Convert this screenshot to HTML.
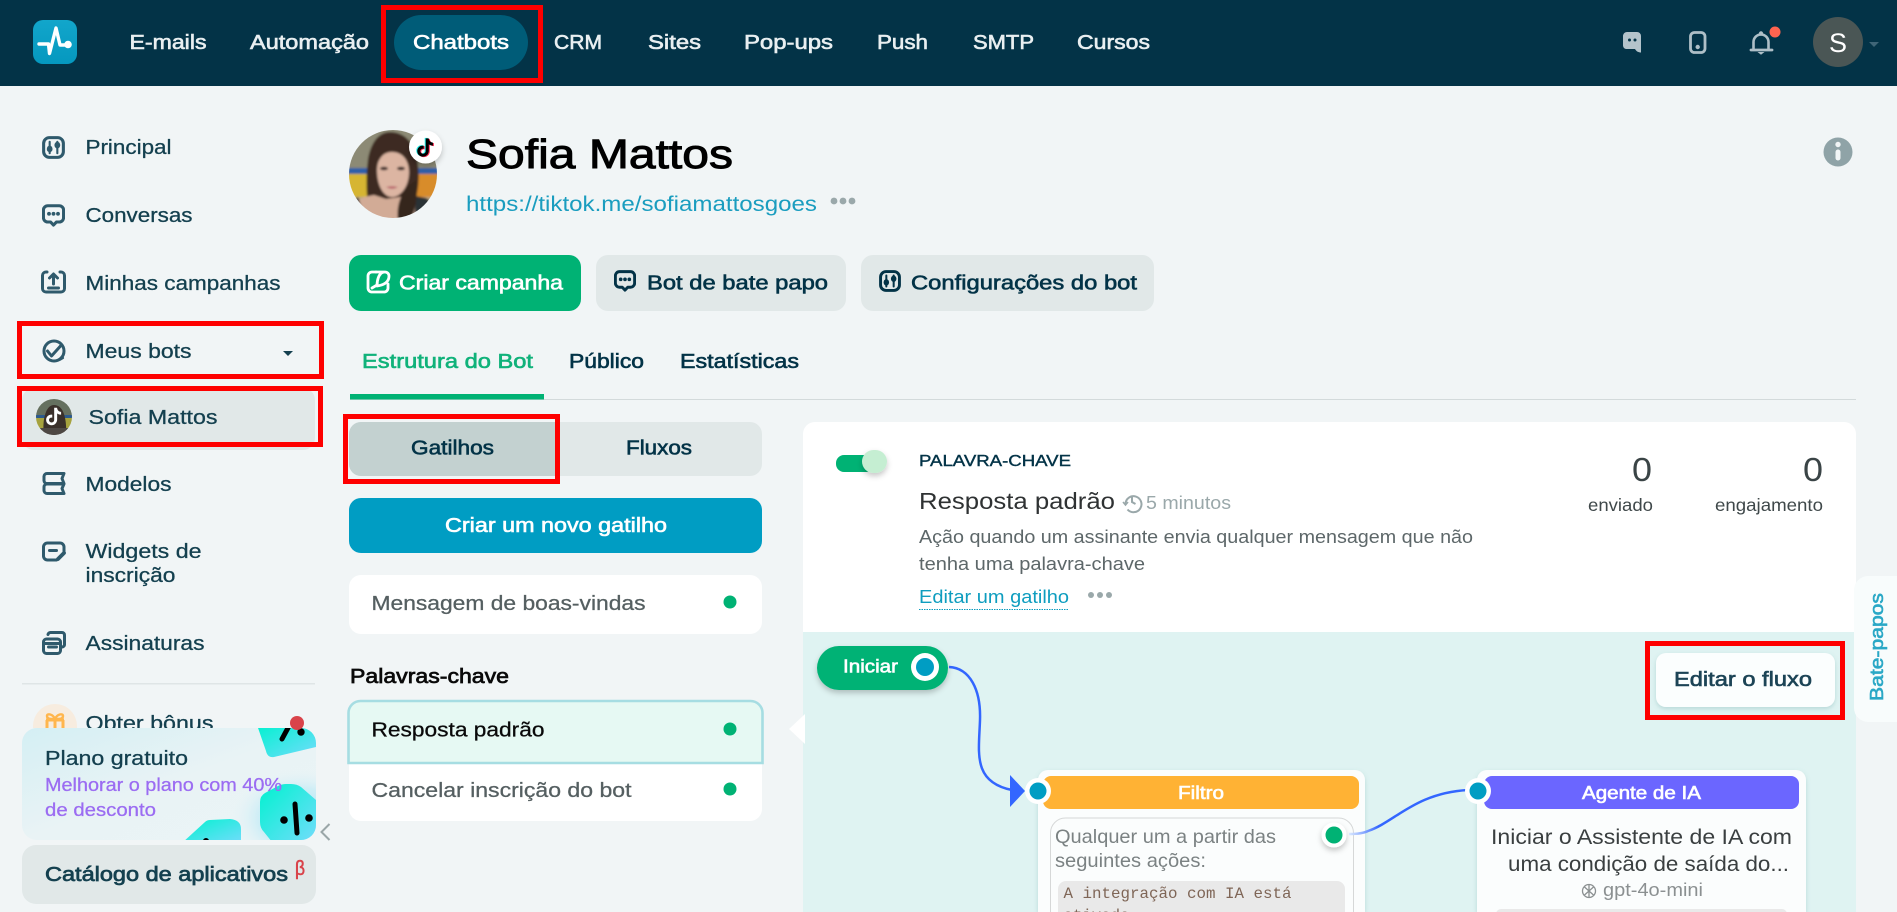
<!DOCTYPE html>
<html lang="pt-BR">
<head>
<meta charset="utf-8">
<title>Sofia Mattos - Chatbots</title>
<style>
html,body{margin:0;padding:0;background:#f1f5f6;overflow:hidden;width:1897px;height:912px}
svg{display:block}
text{font-family:"Liberation Sans",sans-serif;fill:currentColor}
.s{stroke:currentColor;stroke-width:.6px}
.m{stroke:currentColor;stroke-width:.28px}
.ic{fill:none;stroke:#2f5a6c;stroke-width:3;stroke-linecap:round;stroke-linejoin:round}
</style>
</head>
<body>
<svg xmlns="http://www.w3.org/2000/svg" width="1897" height="912" viewBox="0 0 1897 912">
<defs>
  <clipPath id="av"><circle cx="393" cy="174" r="44"/></clipPath>
  <clipPath id="av2"><circle cx="54" cy="417" r="18"/></clipPath>
  <clipPath id="card"><rect x="22" y="728" width="294" height="112" rx="15"/></clipPath>
  <clipPath id="obter"><rect x="0" y="690" width="340" height="38"/></clipPath>
  <clipPath id="grayb"><rect x="1050" y="817" width="304" height="95"/></clipPath>
  <linearGradient id="cg" x1="0" y1="0" x2="1" y2="1"><stop offset="0" stop-color="#d4eff4"/><stop offset=".5" stop-color="#e9f3f5"/><stop offset="1" stop-color="#eaf4f6"/></linearGradient>
  <radialGradient id="glow" cx=".5" cy=".5" r=".5"><stop offset="0" stop-color="#9fe6f7"/><stop offset=".6" stop-color="#bdeaf5" stop-opacity=".6"/><stop offset="1" stop-color="#eaf4f6" stop-opacity="0"/></radialGradient>
  <linearGradient id="bl" x1="0" y1="0" x2="1" y2="1"><stop offset="0" stop-color="#00f2cf"/><stop offset="1" stop-color="#72dcfb"/></linearGradient>
  <linearGradient id="rg" x1="0" x2="1"><stop offset="0" stop-color="#dbe9ff"/><stop offset=".25" stop-color="#3366ff"/></linearGradient>
  <linearGradient id="lg" x1="0" y1="0" x2="0" y2="1"><stop offset="0" stop-color="#12a6cb"/><stop offset="1" stop-color="#0598bf"/></linearGradient>
  <filter id="sh" x="-40%" y="-40%" width="180%" height="200%"><feDropShadow dx="0" dy="3" stdDeviation="3" flood-color="#000" flood-opacity=".22"/></filter>
  <filter id="sh2" x="-20%" y="-20%" width="140%" height="150%"><feDropShadow dx="0" dy="2" stdDeviation="2.5" flood-color="#5a9a9a" flood-opacity=".3"/></filter>
  <filter id="soft" x="-10%" y="-10%" width="120%" height="120%"><feGaussianBlur stdDeviation="1"/></filter>
  <symbol id="tt" viewBox="0 0 24 24"><path d="M15.5 2c.3 2.7 1.900 4.400 4.600 4.700v3.200c-1.700 0-3.200-.5-4.500-1.500v7c0 3.800-2.900 6.600-6.400 6.600-3.500 0-6.200-2.700-6.200-6.100 0-3.700 3.200-6.500 7-5.900v3.400c-2-.4-3.700.8-3.700 2.600 0 1.500 1.300 2.800 2.900 2.800 1.800 0 3-1.200 3-3.100V2z"/></symbol>
  <symbol id="sl" viewBox="0 0 24 24"><rect x="1.700" y="1.700" width="20.600" height="20.600" rx="6" fill="none" stroke="currentColor" stroke-width="3.200"/><path d="M8 6v12M16 6v12" stroke="currentColor" stroke-width="2.200" stroke-linecap="round"/><ellipse cx="8" cy="13.500" rx="3" ry="3.500" fill="currentColor"/><ellipse cx="16" cy="9.500" rx="3" ry="3.500" fill="currentColor"/></symbol>
  <symbol id="ch" viewBox="0 0 24 24"><path d="M6 1.800h12a4.500 4.500 0 0 1 4.500 4.500v8a4.500 4.500 0 0 1-4.500 4.500h-3l-3 3.200-3-3.200H6a4.500 4.500 0 0 1-4.500-4.500v-8A4.500 4.500 0 0 1 6 1.800z" fill="none" stroke="currentColor" stroke-width="3.200" stroke-linejoin="round"/><circle cx="7.300" cy="10.200" r="2" fill="currentColor"/><circle cx="12" cy="10.200" r="2" fill="currentColor"/><circle cx="16.700" cy="10.200" r="2" fill="currentColor"/></symbol>
</defs>

<!-- Top navigation -->
<rect width="1897" height="86" fill="#033347"/>
<rect x="33" y="20" width="44" height="44" rx="10" fill="url(#lg)"/>
<path d="M39 44H48.500L49.500 53.500L56 28L60 45H68" fill="none" stroke="#fff" stroke-width="3.400" stroke-linejoin="round" stroke-linecap="round"/>
<circle cx="68" cy="44.500" r="3.800" fill="#fff"/>
<rect x="394" y="15" width="134" height="55" rx="27.500" fill="#005c78"/>
<g color="#e9eff1" font-size="20" class="s">
  <text x="129.500" y="49" textLength="77" lengthAdjust="spacingAndGlyphs">E-mails</text>
  <text x="250" y="49" textLength="119" lengthAdjust="spacingAndGlyphs">Automação</text>
  <text x="413" y="49" textLength="96" lengthAdjust="spacingAndGlyphs" style="color:#fff">Chatbots</text>
  <text x="554" y="49" textLength="48" lengthAdjust="spacingAndGlyphs">CRM</text>
  <text x="648" y="49" textLength="53" lengthAdjust="spacingAndGlyphs">Sites</text>
  <text x="744" y="49" textLength="89" lengthAdjust="spacingAndGlyphs">Pop-ups</text>
  <text x="877" y="49" textLength="51" lengthAdjust="spacingAndGlyphs">Push</text>
  <text x="973" y="49" textLength="61" lengthAdjust="spacingAndGlyphs">SMTP</text>
  <text x="1077" y="49" textLength="73" lengthAdjust="spacingAndGlyphs">Cursos</text>
</g>
<rect x="383.500" y="7.500" width="157" height="73" fill="none" stroke="#fe0000" stroke-width="5"/>

<!-- Top right icons -->
<path d="M1627 32h10a4 4 0 0 1 4 4v16.500c-2.500 0-4.500-1-6-3.500h-9a3.500 3.500 0 0 1-3-3.500v-10a4 4 0 0 1 4-3.500z" fill="#b3c3cb"/>
<circle cx="1629.500" cy="40" r="1.500" fill="#033347"/><circle cx="1635" cy="40" r="1.500" fill="#033347"/>
<rect x="1690.500" y="32.500" width="14.500" height="20" rx="4" fill="none" stroke="#aebfc7" stroke-width="2.800"/>
<circle cx="1697.700" cy="47" r="2.200" fill="#aebfc7"/>
<path d="M1753.500 49v-7a7.500 7.500 0 0 1 15 0v7" fill="none" stroke="#aebfc7" stroke-width="2.600"/>
<path d="M1751 50h21" stroke="#aebfc7" stroke-width="2.800" stroke-linecap="round"/>
<circle cx="1761" cy="33.500" r="2.200" fill="#aebfc7"/><path d="M1757.500 52h7l-3.500 2.800z" fill="#aebfc7"/>
<circle cx="1775" cy="32" r="5.500" fill="#ff6450"/>
<circle cx="1838" cy="42" r="25" fill="#4a5655"/>
<text x="1829" y="52" font-size="27" color="#fff" textLength="18" lengthAdjust="spacingAndGlyphs">S</text>
<path d="M1869 42h10l-5 5z" fill="#3f6577"/>

<!-- Sidebar -->
<rect x="22" y="388" width="293" height="62" rx="12" fill="#e1e8e8"/>
<use href="#sl" x="42" y="136" width="23" height="23" color="#2f5a6c"/>
<use href="#ch" x="42" y="204" width="23" height="23" color="#2f5a6c"/>
<g class="ic">
  <path d="M47 272h-1a3.500 3.500 0 0 0-3.500 3.500v13a3.500 3.500 0 0 0 3.500 3.500h15a3.500 3.500 0 0 0 3.500-3.500v-13a3.500 3.500 0 0 0-3.500-3.500h-1"/>
  <path d="M53.500 284v-9M49.500 278l4-4 4 4M48.500 288h10"/>
  <circle cx="54" cy="351" r="10"/><path d="M47.500 351l4 5 9-10"/>
  <path d="M46 357c5 5 11 5 17 1" stroke-width="2.200"/>
  <path d="M47 473.500h17l-2 5 2 5H47a3 3 0 0 1-3-2.800v-4.400a3 3 0 0 1 3-2.800zM47 484h17l-2 4.500 2 5H47a3 3 0 0 1-3-3v-3.500a3 3 0 0 1 3-3z"/>
  <path d="M64 552v-5a4 4 0 0 0-4-4H47.500a4 4 0 0 0-4 4v9a4 4 0 0 0 4 4h9M49.500 550.500h7"/>
  <path d="M58 559l6-6" stroke-width="3.800"/>
  <rect x="43.500" y="639" width="17" height="14.500" rx="3"/><path d="M48 634.500a2.500 2.500 0 0 1 2.500-2h11.500a2.500 2.500 0 0 1 2.500 2.500v9.500a2.500 2.500 0 0 1-2 2.500M48.500 647h8M44 643.500h16"/>
</g>
<g clip-path="url(#av2)">
  <rect x="36" y="399" width="36" height="18" fill="#65705f"/>
  <rect x="36" y="415" width="36" height="3" fill="#2c5a8c"/>
  <rect x="36" y="418" width="36" height="12" fill="#a6a23e"/>
  <path d="M44 436c-2-14 1-31 10-31s13 12 12 31z" fill="#3a302a"/>
  <rect x="36" y="428" width="36" height="8" fill="#4d4743"/>
</g>
<use href="#tt" x="43.500" y="406" width="21" height="21" fill="#fff"/>
<g color="#14404f" font-size="20" class="m">
  <text x="85.500" y="154" textLength="86" lengthAdjust="spacingAndGlyphs">Principal</text>
  <text x="85.500" y="222" textLength="107" lengthAdjust="spacingAndGlyphs">Conversas</text>
  <text x="85.500" y="290" textLength="195" lengthAdjust="spacingAndGlyphs">Minhas campanhas</text>
  <text x="85.500" y="358" textLength="106" lengthAdjust="spacingAndGlyphs">Meus bots</text>
  <text x="88.500" y="424" textLength="129" lengthAdjust="spacingAndGlyphs">Sofia Mattos</text>
  <text x="85.500" y="491" textLength="86" lengthAdjust="spacingAndGlyphs">Modelos</text>
  <text x="85.500" y="558" textLength="116" lengthAdjust="spacingAndGlyphs">Widgets de</text>
  <text x="85.500" y="582" textLength="90" lengthAdjust="spacingAndGlyphs">inscrição</text>
  <text x="85.500" y="650" textLength="119" lengthAdjust="spacingAndGlyphs">Assinaturas</text>
  <g clip-path="url(#obter)"><text x="85.500" y="730" textLength="128" lengthAdjust="spacingAndGlyphs">Obter bônus</text></g>
</g>
<path d="M283 351h10l-5 5z" fill="#14404f"/>
<rect x="22" y="683" width="293" height="1.500" fill="#dfe5e6"/>
<g clip-path="url(#obter)">
  <circle cx="55" cy="726" r="22" fill="#f7ecdf"/>
  <g fill="none" stroke="#ffb64d" stroke-width="3"><path d="M47 720v12M63 720v12M55 720v12M46 720h18"/><path d="M55 719c-2-5-8-6-8-3s3 3 8 3c5 0 8 0 8-3s-6-2-8 3z" stroke-width="2.400"/></g>
</g>
<!-- Plan card -->
<rect x="22" y="728" width="294" height="112" rx="15" fill="url(#cg)"/>
<g clip-path="url(#card)">
  <ellipse cx="300" cy="818" rx="70" ry="50" fill="url(#glow)"/>
  <path d="M257 725l9 26q1.500 7 8 6l42-10v-23z" fill="url(#bl)"/>
  <path d="M289 726l-7 13" stroke="#000" stroke-width="5" stroke-linecap="round"/>
  <circle cx="301" cy="732" r="3.700"/>
  <path d="M260 802q0-6 5-9l13-7q4-2 8-2h5q6 0 10 3l15 13v42h-44l-8-10q-4-4-4-10z" fill="url(#bl)"/>
  <path d="M295 804l2 29" stroke="#000" stroke-width="5" stroke-linecap="round"/>
  <circle cx="284" cy="820" r="3.800"/><circle cx="309" cy="818" r="3.800"/>
  <path d="M182 843l23-21q2-2 5-2l20-1q11 1 11 10v14z" fill="url(#bl)"/>
  <circle cx="206" cy="841" r="3"/>
</g>
<circle cx="297" cy="723" r="7" fill="#d9434a"/>
<text x="45" y="765" font-size="20" color="#14404f" class="m" textLength="143" lengthAdjust="spacingAndGlyphs">Plano gratuito</text>
<g color="#9b6cf2" font-size="18.500" class="m">
  <text x="45" y="791" textLength="237" lengthAdjust="spacingAndGlyphs">Melhorar o plano com 40%</text>
  <text x="45" y="816" textLength="111" lengthAdjust="spacingAndGlyphs">de desconto</text>
</g>
<path d="M329.500 824l-8 8 8 8" fill="none" stroke="#9aa6a8" stroke-width="2"/>
<rect x="22" y="845" width="294" height="59" rx="14" fill="#e1e8e8"/>
<text x="45" y="881" font-size="20" color="#14404f" style="stroke-width:.7px" class="s" textLength="243" lengthAdjust="spacingAndGlyphs">Catálogo de aplicativos</text>
<text x="295" y="875" font-size="20" color="#d9434a" class="s" font-family="DejaVu Sans" textLength="10" lengthAdjust="spacingAndGlyphs">β</text>
<rect x="19.500" y="323.500" width="302" height="53" fill="none" stroke="#fe0000" stroke-width="5"/>
<rect x="19.500" y="388.500" width="301" height="56" fill="none" stroke="#fe0000" stroke-width="5"/>

<!-- Profile header -->
<g clip-path="url(#av)">
  <g filter="url(#soft)">
    <rect x="345" y="126" width="96" height="44" fill="#8c8a74"/>
    <rect x="345" y="168" width="96" height="6" fill="#2f5fa8"/>
    <rect x="345" y="174" width="48" height="30" fill="#d6b530"/>
    <rect x="393" y="174" width="48" height="30" fill="#d88c2a"/>
    <rect x="345" y="197" width="96" height="25" fill="#b9a582"/>
    <path d="M368 205c-2-15-2-30 0-46 3-17 11-27 22-27 14 0 24 10 27 27 3 15 2 30-3 46l-8 14h-30z" fill="#3e2c20"/>
    <path d="M352 222l0-18 12-7 10-2 12 4 14-2 10-2 6 3 12 6v18z" fill="#d2ab96"/>
    <path d="M346 206l12-9 4 12-2 14h-14zM416 196l10 2 12 8v16h-24z" fill="#2c3034"/>
    <path d="M398 222c-2-14 2-26 8-34l10-8c2 14 0 30-6 42z" fill="#35261c"/>
    <path d="M377 170c0-11 6-18 15-18 11 0 17 9 17 20 0 14-8 25-17 25-9 0-15-12-15-27z" fill="#dcb5a2"/>
    <path d="M376 168c2-8 7-14 11-17-5 1-12 6-13 16zM410 170c-1-9-6-16-13-19 8 1 15 8 15 18z" fill="#3e2c20"/>
    <ellipse cx="384" cy="168.500" rx="4" ry="1.800" fill="#3a2a25"/><ellipse cx="401" cy="168.500" rx="4" ry="1.800" fill="#3a2a25"/>
    <path d="M386 187q6 3.500 12 0q-6-1.500-12 0z" fill="#b8626a"/>
  </g>
</g>
<circle cx="425.500" cy="147" r="16.500" fill="#fff" filter="url(#sh)"/>
<use href="#tt" x="413.500" y="136" width="22" height="22" fill="#25f4ee"/>
<use href="#tt" x="415.500" y="137" width="22" height="22" fill="#fe2c55"/>
<use href="#tt" x="414.500" y="136.500" width="22" height="22" fill="#000"/>
<text x="466" y="168" font-size="41" color="#000" style="stroke-width:.95px" class="s" textLength="267" lengthAdjust="spacingAndGlyphs">Sofia Mattos</text>
<text x="466" y="211" font-size="21" color="#1a9dbf" textLength="351" lengthAdjust="spacingAndGlyphs">https://tiktok.me/sofiamattosgoes</text>
<g fill="#9aa8aa"><circle cx="834" cy="201" r="3.400"/><circle cx="843" cy="201" r="3.400"/><circle cx="852" cy="201" r="3.400"/></g>
<circle cx="1838" cy="152" r="14.500" fill="#8fa3a7"/>
<circle cx="1838" cy="144.500" r="2.700" fill="#f1f5f6"/><rect x="1835.500" y="149.500" width="5" height="11" rx="2.500" fill="#f1f5f6"/>

<!-- Action buttons -->
<rect x="349" y="255" width="232" height="56" rx="12" fill="#00b274"/>
<g fill="none" stroke="#fff" stroke-width="2.800" stroke-linejoin="round" stroke-linecap="round">
  <path d="M376 272h-4a4 4 0 0 0-4 4v12a4 4 0 0 0 4 4h12a4 4 0 0 0 4-4v-4"/>
  <path d="M376 272h9a4 4 0 0 1 4 4c0 6-5 9-12 10 0-4 1-14 8-14M372 288l5-3"/>
</g>
<text x="399" y="289.500" font-size="20" color="#fff" class="s" textLength="164" lengthAdjust="spacingAndGlyphs">Criar campanha</text>
<rect x="596" y="255" width="250" height="56" rx="12" fill="#e1e8e8"/>
<use href="#ch" x="614" y="270" width="22" height="22" color="#033347"/>
<text x="647" y="289.500" font-size="20" color="#033347" class="s" textLength="181" lengthAdjust="spacingAndGlyphs">Bot de bate papo</text>
<rect x="861" y="255" width="293" height="56" rx="12" fill="#e1e8e8"/>
<use href="#sl" x="879" y="270" width="22" height="22" color="#033347"/>
<text x="911" y="289.500" font-size="20" color="#033347" class="s" textLength="226" lengthAdjust="spacingAndGlyphs">Configurações do bot</text>

<!-- Tabs -->
<rect x="350" y="399" width="1506" height="1" fill="#d3dadb"/>
<rect x="350" y="394" width="194" height="5.500" fill="#00b274"/>
<g font-size="20" class="s">
  <text x="362" y="368" color="#10b27a" textLength="171" lengthAdjust="spacingAndGlyphs">Estrutura do Bot</text>
  <text x="569" y="368" color="#033347" textLength="75" lengthAdjust="spacingAndGlyphs">Público</text>
  <text x="680" y="368" color="#033347" textLength="119" lengthAdjust="spacingAndGlyphs">Estatísticas</text>
</g>

<!-- Left column -->
<rect x="349" y="422" width="413" height="54" rx="12" fill="#e1e8e8"/>
<path d="M361 422h194v54H361a12 12 0 0 1-12-12v-30a12 12 0 0 1 12-12z" fill="#c3d1d0"/>
<g font-size="20" color="#033347" class="s">
  <text x="411" y="454.500" textLength="83" lengthAdjust="spacingAndGlyphs">Gatilhos</text>
  <text x="626" y="454.500" textLength="66" lengthAdjust="spacingAndGlyphs">Fluxos</text>
</g>
<rect x="345.500" y="416.500" width="212" height="65" fill="none" stroke="#fe0000" stroke-width="5"/>
<rect x="349" y="498" width="413" height="55" rx="12" fill="#009dc3"/>
<text x="445" y="532" font-size="20" color="#fff" class="s" textLength="222" lengthAdjust="spacingAndGlyphs">Criar um novo gatilho</text>
<rect x="349" y="575" width="413" height="59" rx="12" fill="#fff"/>
<text x="371.500" y="610" font-size="20" color="#555f61" class="m" textLength="274" lengthAdjust="spacingAndGlyphs">Mensagem de boas-vindas</text>
<circle cx="730" cy="602" r="6.500" fill="#00b274"/>
<text x="350" y="683" font-size="20" color="#0a0a0a" style="stroke-width:.7px" class="s" textLength="159" lengthAdjust="spacingAndGlyphs">Palavras-chave</text>
<path d="M349 750h413v59a12 12 0 0 1-12 12H361a12 12 0 0 1-12-12z" fill="#fff"/>
<path d="M348.500 763v-50a12 12 0 0 1 12-12h390a12 12 0 0 1 12 12v50z" fill="#e6f9f3" stroke="#a6dde2" stroke-width="2.600"/>
<text x="371.500" y="736.500" font-size="20" color="#0a0a0a" class="m" textLength="173" lengthAdjust="spacingAndGlyphs">Resposta padrão</text>
<circle cx="730" cy="729" r="6.500" fill="#00b274"/>
<text x="371.500" y="797" font-size="20" color="#555f61" class="m" textLength="260" lengthAdjust="spacingAndGlyphs">Cancelar inscrição do bot</text>
<circle cx="730" cy="789" r="6.500" fill="#00b274"/>

<!-- Right panel -->
<path d="M803 632v-198a12 12 0 0 1 12-12h1029a12 12 0 0 1 12 12v198z" fill="#fff"/>
<rect x="803" y="632" width="1053" height="280" fill="#dff3f2"/>
<path d="M805 714l-16 15 16 15z" fill="#fff"/>
<rect x="836" y="455" width="38" height="17" rx="8" fill="#00b274"/>
<rect x="862" y="450" width="25" height="23" rx="11.500" fill="#c5eed2" filter="url(#sh)"/>
<text x="919" y="466" font-size="16" color="#033347" class="s" style="stroke-width:.4px" textLength="152" lengthAdjust="spacingAndGlyphs">PALAVRA-CHAVE</text>
<text x="919" y="509" font-size="23" color="#2f3233" textLength="196" lengthAdjust="spacingAndGlyphs">Resposta padrão</text>
<g fill="none" stroke="#9aa8aa" stroke-width="2"><path d="M1125.500 504a8 8 0 1 1 2 5.500"/><path d="M1132 497v5l3.500 2"/><path d="M1123 502l2.500 3 2.500-3" stroke-width="1.600"/></g>
<text x="1146" y="509" font-size="18" color="#9aa8aa" textLength="85" lengthAdjust="spacingAndGlyphs">5 minutos</text>
<g font-size="18" color="#5d6769">
  <text x="919" y="543" textLength="554" lengthAdjust="spacingAndGlyphs">Ação quando um assinante envia qualquer mensagem que não</text>
  <text x="919" y="570" textLength="226" lengthAdjust="spacingAndGlyphs">tenha uma palavra-chave</text>
</g>
<text x="919" y="603" font-size="18" color="#0e9dbf" textLength="150" lengthAdjust="spacingAndGlyphs">Editar um gatilho</text>
<path d="M919 609.500h150" stroke="#0e9dbf" stroke-width="1" stroke-dasharray="1.500 1"/>
<g fill="#9aa8aa"><circle cx="1091" cy="595" r="3"/><circle cx="1100" cy="595" r="3"/><circle cx="1109" cy="595" r="3"/></g>
<g color="#3a4446" font-size="33">
  <text x="1632" y="481" textLength="20" lengthAdjust="spacingAndGlyphs">0</text>
  <text x="1803" y="481" textLength="20" lengthAdjust="spacingAndGlyphs">0</text>
</g>
<g color="#3f484a" font-size="17.500">
  <text x="1588" y="511" textLength="65" lengthAdjust="spacingAndGlyphs">enviado</text>
  <text x="1715" y="511" textLength="108" lengthAdjust="spacingAndGlyphs">engajamento</text>
</g>

<!-- Flow canvas -->
<path d="M949 667C970 668 981 690 980 720C979 752 972 782 1012 790" fill="none" stroke="#3366ff" stroke-width="2.500"/>
<path d="M1010 775l15 16-15 16z" fill="#3366ff"/>
<rect x="817" y="646" width="131" height="44" rx="22" fill="#00b274" filter="url(#sh)"/>
<text x="843" y="672.500" font-size="18" color="#fff" class="s" textLength="55" lengthAdjust="spacingAndGlyphs">Iniciar</text>
<circle cx="925" cy="667" r="14" fill="#fff"/><circle cx="925" cy="667" r="9" fill="#009dc3"/>

<path d="M1038 780a10 10 0 0 1 10-10h307a10 10 0 0 1 10 10v132h-327z" fill="#fbfdfd" filter="url(#sh2)"/>
<path d="M1051 776h300a8 8 0 0 1 8 8v17a8 8 0 0 1-8 8h-300a8 8 0 0 1-8-8v-17a8 8 0 0 1 8-8z" fill="#ffb234"/>
<text x="1178" y="799" font-size="18" color="#fff" class="s" textLength="46" lengthAdjust="spacingAndGlyphs">Filtro</text>
<circle cx="1038" cy="791" r="13" fill="#fff"/><circle cx="1038" cy="791" r="8.500" fill="#009dc3"/>
<path d="M1050.500 914V833a15 15 0 0 1 15-15h273a15 15 0 0 1 15 15v81" fill="none" stroke="#d6d8d8" stroke-width="1"/>
<g font-size="19.500" color="#7b8283">
  <text x="1055" y="843" textLength="221" lengthAdjust="spacingAndGlyphs">Qualquer um a partir das</text>
  <text x="1055" y="867" textLength="151" lengthAdjust="spacingAndGlyphs">seguintes ações:</text>
</g>
<g clip-path="url(#grayb)">
  <rect x="1058" y="881" width="287" height="60" rx="8" fill="#e9e9e9"/>
  <text x="1063.500" y="898" font-size="16" color="#7f6657" style="font-family:'Liberation Mono',monospace" textLength="228" lengthAdjust="spacingAndGlyphs">A integração com IA está</text>
  <text x="1063.500" y="920" font-size="16" color="#7f6657" style="font-family:'Liberation Mono',monospace" textLength="66" lengthAdjust="spacingAndGlyphs">ativada</text>
</g>
<circle cx="1334" cy="835" r="12.500" fill="#fff" filter="url(#sh)"/><circle cx="1334" cy="835" r="8.500" fill="#00b274"/>
<path d="M1349 834C1352 834 1362 834 1368 831C1395 822 1415 793 1468 790" fill="none" stroke="url(#rg)" stroke-width="2.500"/>

<path d="M1477 780a10 10 0 0 1 10-10h309a10 10 0 0 1 10 10v132h-329z" fill="#fbfdfd" filter="url(#sh2)"/>
<path d="M1492 776h299a8 8 0 0 1 8 8v17a8 8 0 0 1-8 8h-299a8 8 0 0 1-8-8v-17a8 8 0 0 1 8-8z" fill="#6b66ff"/>
<text x="1582" y="799" font-size="18" color="#fff" class="s" textLength="119" lengthAdjust="spacingAndGlyphs">Agente de IA</text>
<circle cx="1478" cy="791" r="13" fill="#fff"/><circle cx="1478" cy="791" r="8.500" fill="#009dc3"/>
<g font-size="21" color="#3a3f40">
  <text x="1491" y="844" textLength="301" lengthAdjust="spacingAndGlyphs">Iniciar o Assistente de IA com</text>
  <text x="1508" y="871" textLength="281" lengthAdjust="spacingAndGlyphs">uma condição de saída do...</text>
</g>
<g fill="none" stroke="#8b9091" stroke-width="1.300"><circle cx="1589" cy="891" r="6.500"/><path d="M1584.500 887l9 8M1593.500 887l-9 8M1589 884.500v13"/></g>
<text x="1603" y="896" font-size="18" color="#8b9091" textLength="100" lengthAdjust="spacingAndGlyphs">gpt-4o-mini</text>
<rect x="1496" y="909" width="291" height="10" rx="5" fill="#e9e9e9"/>

<rect x="1656" y="653" width="179" height="54" rx="10" fill="#fbfefe" filter="url(#sh2)"/>
<text x="1674" y="686" font-size="20" color="#1c4456" class="s" textLength="138" lengthAdjust="spacingAndGlyphs">Editar o fluxo</text>
<rect x="1647.500" y="643.500" width="195" height="74" fill="none" stroke="#fe0000" stroke-width="5"/>

<!-- Side tab -->
<path d="M1897 576h-29a14 14 0 0 0-14 14v118a14 14 0 0 0 14 14h29z" fill="#f8fcfc"/>
<text transform="translate(1883 701) rotate(-90)" font-size="18" color="#2aa8c6" class="s" textLength="108" lengthAdjust="spacingAndGlyphs">Bate-papos</text>
</svg>
</body>
</html>
